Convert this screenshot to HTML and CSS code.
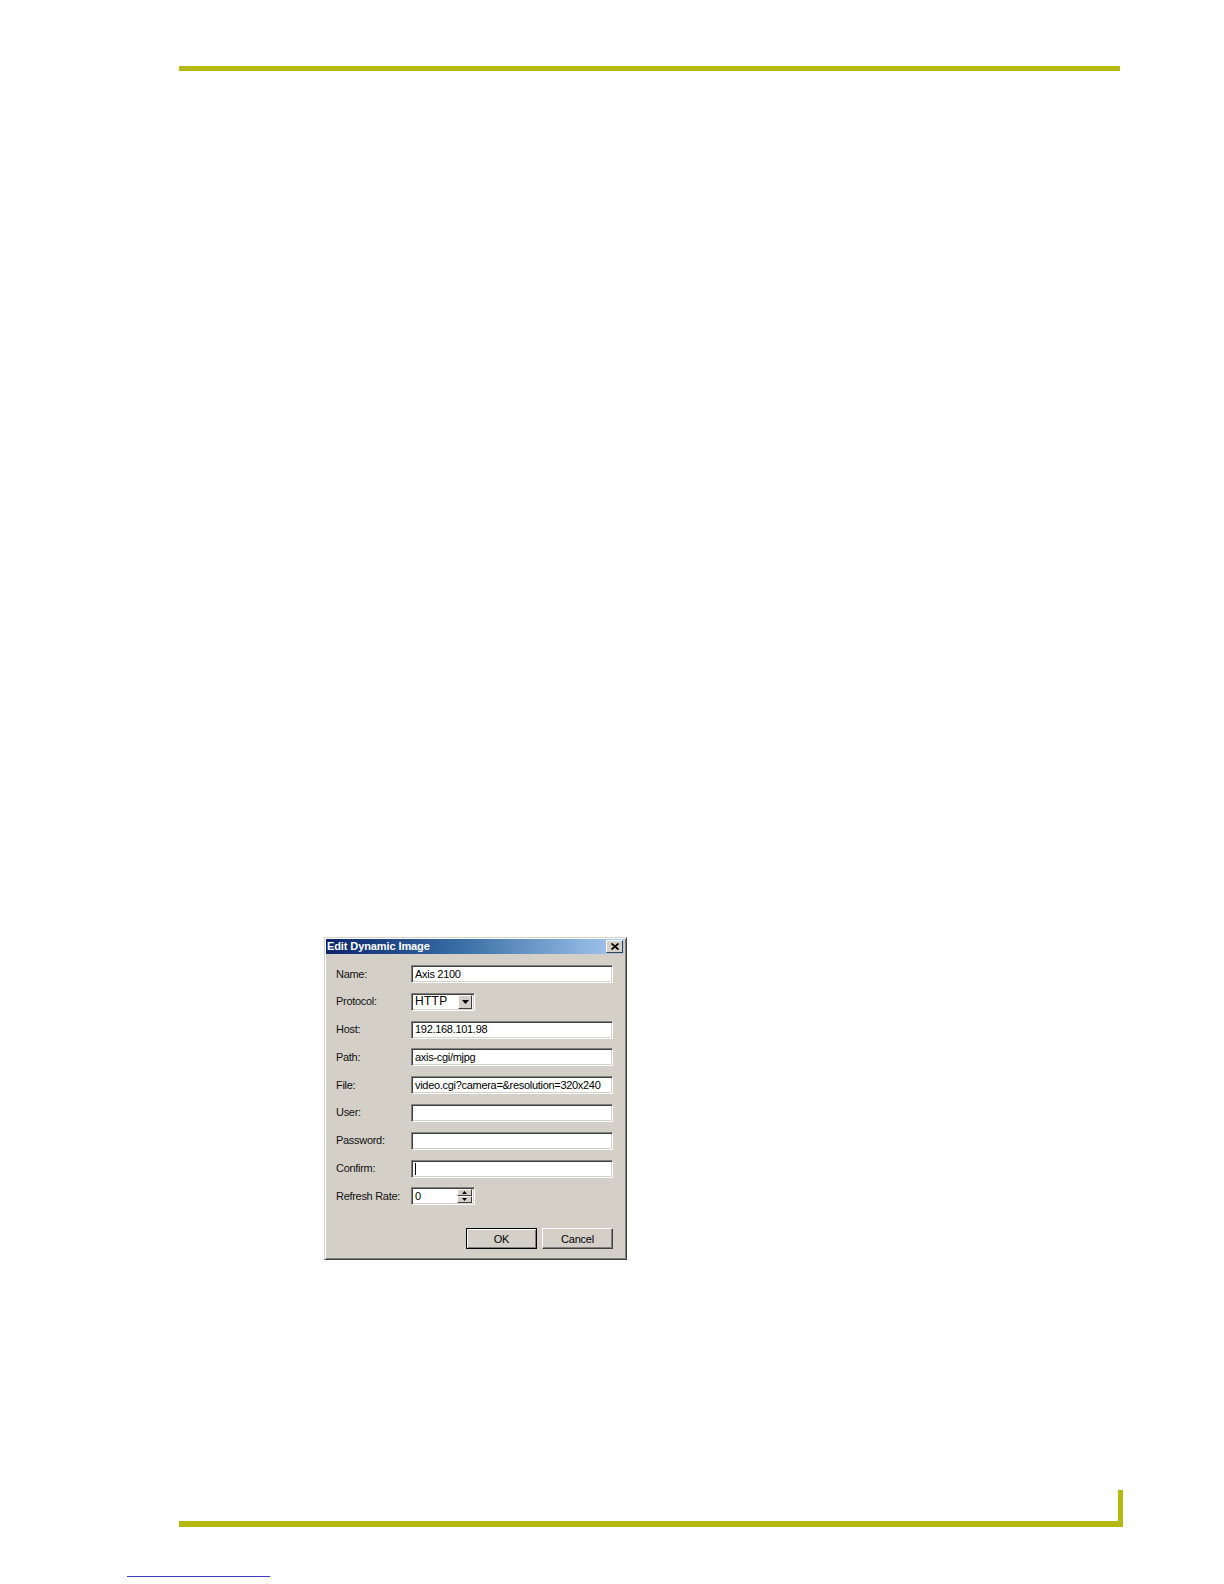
FILE: index.html
```html
<!DOCTYPE html>
<html>
<head>
<meta charset="utf-8">
<link rel="stylesheet" href="styles.css">
</head>
<body>
<div class="page">
  <div class="rule-top"></div>
  <div class="dialog">
    <div class="titlebar">
      <span class="title">Edit Dynamic Image</span>
      <span class="close"><svg width="8" height="7" viewBox="0 0 8 7"><path d="M0.5 0.5L7.5 6.5M7.5 0.5L0.5 6.5" stroke="#000" stroke-width="1.8"/></svg></span>
    </div>
    <div class="form">
      <label>Name:</label><div class="field"><span>Axis 2100</span></div>
      <label>Protocol:</label>
      <div class="select"><span class="sel-text">HTTP</span><span class="drop"><svg width="7" height="4" viewBox="0 0 7 4"><path d="M0 0h7L3.5 4z" fill="#000"/></svg></span></div>
      <label>Host:</label><div class="field"><span>192.168.101.98</span></div>
      <label>Path:</label><div class="field"><span>axis-cgi/mjpg</span></div>
      <label>File:</label><div class="field"><span>video.cgi?camera=&amp;resolution=320x240</span></div>
      <label>User:</label><div class="field"></div>
      <label>Password:</label><div class="field"></div>
      <label>Confirm:</label><div class="field"><span class="caret"></span></div>
      <label>Refresh Rate:</label>
      <div class="spin"><span>0</span><span class="spin-btns"><span class="sb"><svg width="5" height="3" viewBox="0 0 5 3"><path d="M2.5 0L5 3H0z" fill="#000"/></svg></span><span class="sb"><svg width="5" height="3" viewBox="0 0 5 3"><path d="M0 0h5L2.5 3z" fill="#000"/></svg></span></span></div>
    </div>
    <div class="buttons">
      <button class="btn default">OK</button>
      <button class="btn">Cancel</button>
    </div>
  </div>
  <div class="footer-rule"></div>
  <div class="link-line"></div>
</div>
</body>
</html>
```

FILE: styles.css
```css
html, body {
  margin: 0;
  padding: 0;
  background: #ffffff;
  width: 1224px;
  height: 1584px;
  overflow: hidden;
}
.page {
  padding-top: 66px;
  height: 1584px;
  box-sizing: border-box;
  overflow: hidden;
  font-family: "Liberation Sans", Arial, sans-serif;
}
.rule-top {
  margin-left: 179px;
  width: 941px;
  height: 5px;
  background: #b4b80f;
}
.dialog {
  margin-top: 866px;
  margin-left: 324px;
  width: 303px;
  height: 323px;
  box-sizing: border-box;
  background: #d4d0c8;
  border-top: 1px solid #d4d0c8;
  border-left: 1px solid #d4d0c8;
  border-right: 1px solid #404040;
  border-bottom: 1px solid #404040;
  box-shadow: inset 1px 1px 0 #ffffff, inset -1px -1px 0 #808080;
  padding: 1px 2px 0 1px;
  display: flex;
  flex-direction: column;
}
.titlebar {
  height: 15px;
  flex: none;
  background: linear-gradient(to right, #0a246a 0%, #3a6ea5 45%, #a6caf0 100%);
  display: flex;
  align-items: center;
  justify-content: space-between;
  padding-left: 1px;
}
.title {
  color: #ffffff;
  font-weight: bold;
  font-size: 11px;
  line-height: 15px;
  letter-spacing: -0.1px;
}
.close {
  width: 17px;
  height: 13px;
  margin-right: 1px;
  background: #d4d0c8;
  border-top: 1px solid #ffffff;
  border-left: 1px solid #ffffff;
  border-right: 1px solid #404040;
  border-bottom: 1px solid #404040;
  box-sizing: border-box;
  display: flex;
  align-items: center;
  justify-content: center;
}
.form {
  display: grid;
  grid-template-columns: 75px 202px;
  grid-auto-rows: 18px;
  row-gap: 9.8px;
  padding: 11px 0 0 10px;
  font-size: 11px;
  line-height: 13px;
  color: #000;
  align-items: center;
}
.form label {
  letter-spacing: -0.3px;
  color: #111;
}
.field {
  height: 18px;
  box-sizing: border-box;
  background: #ffffff;
  border-top: 1px solid #808080;
  border-left: 1px solid #808080;
  border-right: 1px solid #ffffff;
  border-bottom: 1px solid #ffffff;
  box-shadow: inset 1px 1px 0 #404040, inset -1px -1px 0 #d4d0c8;
  padding: 0 3px;
  display: flex;
  align-items: center;
  letter-spacing: -0.3px;
  white-space: nowrap;
  overflow: hidden;
}
.caret {
  width: 1px;
  height: 12px;
  background: #000;
}
.select, .spin {
  width: 64px;
  height: 18px;
  box-sizing: border-box;
  background: #ffffff;
  border-top: 1px solid #808080;
  border-left: 1px solid #808080;
  border-right: 1px solid #ffffff;
  border-bottom: 1px solid #ffffff;
  box-shadow: inset 1px 1px 0 #404040, inset -1px -1px 0 #d4d0c8;
  display: flex;
  align-items: center;
  justify-content: space-between;
  padding: 2px 2px 2px 3px;
}
.sel-text {
  font-size: 12px;
  letter-spacing: 0.3px;
}
.drop {
  width: 14px;
  height: 14px;
  box-sizing: border-box;
  background: #d4d0c8;
  border-top: 1px solid #ffffff;
  border-left: 1px solid #ffffff;
  border-right: 1px solid #404040;
  border-bottom: 1px solid #404040;
  display: flex;
  align-items: center;
  justify-content: center;
}
.spin-btns {
  width: 15px;
  height: 14px;
  display: flex;
  flex-direction: column;
}
.sb {
  flex: 1;
  background: #d4d0c8;
  border-top: 1px solid #ffffff;
  border-left: 1px solid #ffffff;
  border-right: 1px solid #404040;
  border-bottom: 1px solid #404040;
  display: flex;
  align-items: center;
  justify-content: center;
  box-sizing: border-box;
}
.buttons {
  display: flex;
  justify-content: flex-end;
  gap: 5px;
  margin-top: 23px;
  padding-right: 11px;
}
.btn {
  width: 71px;
  height: 21px;
  box-sizing: border-box;
  background: #d4d0c8;
  font-family: "Liberation Sans", Arial, sans-serif;
  font-size: 11px;
  color: #000;
  border-top: 1px solid #ffffff;
  border-left: 1px solid #ffffff;
  border-right: 1px solid #404040;
  border-bottom: 1px solid #404040;
  box-shadow: inset -1px -1px 0 #808080;
  padding: 0;
  letter-spacing: -0.2px;
}
.btn.default {
  border: 1px solid #000000;
  box-shadow: inset 1px 1px 0 #ffffff, inset -1px -1px 0 #808080;
}
.footer-rule {
  margin-top: 230px;
  margin-left: 179px;
  width: 944px;
  height: 37px;
  box-sizing: border-box;
  border-right: 5px solid #b4b80f;
  border-bottom: 6px solid #b4b80f;
}
.link-line {
  margin-top: 49px;
  margin-left: 127px;
  width: 143px;
  height: 1px;
  background: #3c3cc8;
}
```
